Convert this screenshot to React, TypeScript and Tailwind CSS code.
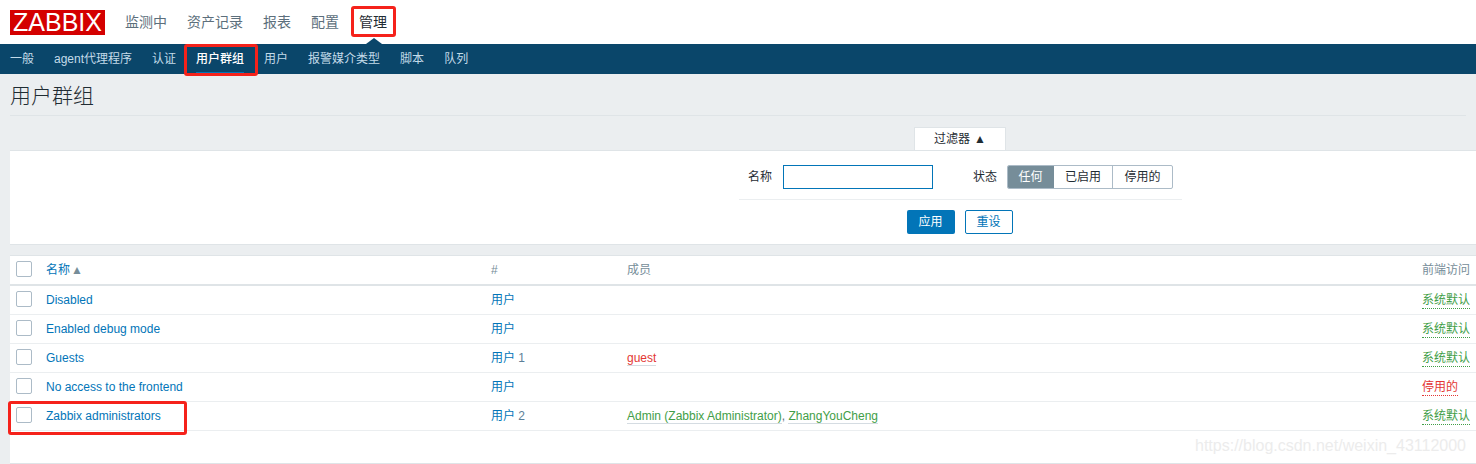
const font = "font-['Liberation_Sans','Noto_Sans_CJK_SC',sans-serif]";

const mainNav = ["监测中", "资产记录", "报表", "配置"];

const subNav = ["一般", "agent代理程序", "认证", "用户群组", "用户", "报警媒介类型", "脚本", "队列"];

const groups = [
  { name: "Disabled", users: "用户", count: "", members: [] as { n: string; c: string }[], access: "系统默认", ok: true },
  { name: "Enabled debug mode", users: "用户", count: "", members: [], access: "系统默认", ok: true },
  { name: "Guests", users: "用户", count: "1", members: [{ n: "guest", c: "text-[#e33734]" }], access: "系统默认", ok: true },
  { name: "No access to the frontend", users: "用户", count: "", members: [], access: "停用的", ok: false },
  {
    name: "Zabbix administrators",
    users: "用户",
    count: "2",
    members: [
      { n: "Admin (Zabbix Administrator)", c: "text-[#429e47]" },
      { n: "ZhangYouCheng", c: "text-[#429e47]" },
    ],
    access: "系统默认",
    ok: true,
  },
];

function Checkbox() {
  return <span className="mt-[5px] block h-4 w-4 self-start rounded-[2px] border border-[#acbbc7] bg-white" />;
}

export default function App() {
  return (
    <div className={`${font} relative h-[464px] w-[1476px] overflow-hidden bg-[#ebeef0] text-xs text-[#1f2c33]`}>
      {/* top menu */}
      <div className="flex h-11 items-center bg-white pl-2.5">
        <div className="mr-[20px] flex h-[25px] w-[95px] items-center justify-center bg-[#d40000] text-[25px] leading-none text-white">
          ZABBIX
        </div>
        <nav className="flex gap-5 text-sm text-[#5c6f7c]">
          {mainNav.map((m) => (
            <span key={m}>{m}</span>
          ))}
          <span className="text-[#1f2c33]">管理</span>
        </nav>
      </div>

      {/* sub menu */}
      <div className="relative flex h-[30px] items-center gap-5 bg-[#0a466a] pl-2.5 text-xs text-[#c3dbe9]">
        <span className="absolute -top-[6px] left-[366px] h-0 w-0 border-x-[8px] border-b-[6px] border-x-transparent border-b-[#0a466a]" />
        {subNav.map((s) =>
          s === "用户群组" ? (
            <span key={s} className="relative font-medium text-white">
              {s}
              <span className="absolute -bottom-[7px] left-0 h-[2px] w-full bg-[#0275b8]" />
            </span>
          ) : (
            <span key={s}>{s}</span>
          ),
        )}
      </div>

      {/* title */}
      <div className="mx-2.5 flex h-[42px] items-center border-b border-[#dfe4e7] pt-[2px] text-[21px] font-light text-[#1f2c33]">
        用户群组
      </div>

      {/* filter */}
      <div className="flex justify-end pr-[470px] pt-[11px]">
        <div className="flex h-[23px] w-[92px] items-center justify-center gap-1 rounded-t-[1px] border-x border-t border-[#dfe4e7] bg-white">
          过滤器 <span className="text-[12px] leading-none">▲</span>
        </div>
      </div>
      <div className="ml-2.5 h-[95px] border-y border-[#dfe4e7] bg-white pt-[14px]">
        <div className="flex items-center">
          <span className="ml-[727px] w-[36px] pr-[1px] text-right">名称</span>
          <span className="ml-[10px] h-6 w-[150px] border border-[#0275b8]" />
          <span className="ml-10 w-[24px]">状态</span>
          <div className="ml-[10px] flex h-6 overflow-hidden rounded-[2px] border border-[#acbbc7]">
            <span className="-my-px -ml-px flex w-[47px] items-center justify-center bg-[#768d99] text-white">任何</span>
            <span className="flex w-[59px] items-center justify-center border-r border-[#acbbc7]">已启用</span>
            <span className="flex w-[59px] items-center justify-center">停用的</span>
          </div>
        </div>
        <div className="ml-[729px] mt-[10px] w-[443px] border-t border-[#ebeef0] pt-[10px]">
          <div className="flex justify-center gap-2.5 pr-[2px]">
            <span className="flex h-6 w-12 items-center justify-center rounded-[2px] bg-[#0275b8] text-white">应用</span>
            <span className="flex h-6 w-12 items-center justify-center rounded-[2px] border border-[#0275b8] text-[#0275b8]">重设</span>
          </div>
        </div>
      </div>

      {/* table */}
      <div className="ml-2.5 mt-2.5 h-[209px] border-y border-[#dfe4e7] bg-white">
        <div className="grid h-[30px] grid-cols-[30px_445px_136px_1fr_48px] items-center border-b-2 border-[#dfe4e7] px-1.5 text-[#768d99]">
          <Checkbox />
          <span className="flex items-center gap-[1px] text-[#0275b8]">
            名称<span className="text-[12px] leading-none text-[#768d99]">▲</span>
          </span>
          <span>#</span>
          <span>成员</span>
          <span>前端访问</span>
        </div>
        {groups.map((g) => (
          <div
            key={g.name}
            className="grid h-[29px] grid-cols-[30px_445px_136px_1fr_48px] items-center border-b border-[#ebeef0] px-1.5"
          >
            <Checkbox />
            <span className="text-[#0275b8]">{g.name}</span>
            <span className="text-[#0275b8]">
              {g.users}
              {g.count && <span className="text-[#5c7f99]"> {g.count}</span>}
            </span>
            <span>
              {g.members.map((m, i) => (
                <span key={m.n}>
                  {i > 0 && <span className="text-[#5c6f7c]">, </span>}
                  <span className={`${m.c} border-b border-[#d5dce2]`}>{m.n}</span>
                </span>
              ))}
            </span>
            <span className="flex">
              <span
                className={`border-b border-dotted ${g.ok ? "border-[#429e47] text-[#429e47]" : "border-[#e33734] text-[#e33734]"}`}
              >
                {g.access}
              </span>
            </span>
          </div>
        ))}
      </div>

      {/* red annotation boxes */}
      <span className="absolute left-[351px] top-[6px] h-[31px] w-[45px] rounded-[3px] border-[3px] border-[#f5221b]" />
      <span className="absolute left-[184px] top-[44px] h-[32px] w-[74px] rounded-[3px] border-[3px] border-[#f5221b]" />
      <span className="absolute left-[8px] top-[401px] h-[34px] w-[179px] rounded-[3px] border-[3px] border-[#f5221b]" />

      {/* watermark */}
      <span className="absolute left-[1195px] top-[435px] text-[16px] text-[#ececec]">
        https://blog.csdn.net/weixin_43112000
      </span>
    </div>
  );
}
